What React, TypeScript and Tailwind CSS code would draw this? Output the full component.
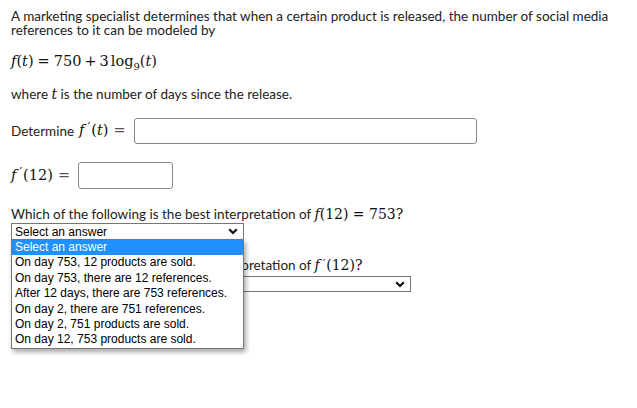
import { FC } from "react";

const options = [
  "Select an answer",
  "On day 753, 12 products are sold.",
  "On day 753, there are 12 references.",
  "After 12 days, there are 753 references.",
  "On day 2, there are 751 references.",
  "On day 2, 751 products are sold.",
  "On day 12, 753 products are sold.",
];

const Chevron: FC = () => (
  <svg width="10" height="7" viewBox="0 0 10 7" className="shrink-0">
    <path d="M1.2 1.2 L5 5 L8.8 1.2" fill="none" stroke="#111" strokeWidth="2.2" />
  </svg>
);

const I: FC<{ children: React.ReactNode }> = ({ children }) => <span className="italic">{children}</span>;

const math = "font-['DejaVu_Serif',serif] text-[14.5px] text-[#111]";

const FPrime: FC<{ arg: string; italicArg?: boolean }> = ({ arg, italicArg }) => (
  <span className={math}>
    <I>f</I>
    <span className="text-[12px] relative top-[-3px] ml-[3px] mr-[1px]">′</span>(
    {italicArg ? <I>{arg}</I> : arg})
  </span>
);

const App: FC = () => {
  return (
    <div className="relative w-[637px] h-[408px] bg-white text-[#222] font-['Lato',sans-serif] text-[13.5px]">
      <div className="pl-[11px] pt-[9px] w-[626px]">
        <p className="leading-[14px]">
          A marketing specialist determines that when a certain product is released, the number of social media
          references to it can be modeled by
        </p>

        <div className={`mt-[15px] h-[20px] flex items-center ${math}`}>
          <I>f</I>(<I>t</I>)<span className="mx-[4px]">=</span>750<span className="mx-[3px]">+</span>3
          <span className="ml-[2px]">log</span>
          <span className="text-[10px] relative top-[4px]">9</span>(<I>t</I>)
        </div>

        <p className="mt-[15px] leading-[14px]">
          where <span className="font-['DejaVu_Serif',serif] italic text-[14px] text-[#111]">t</span> is the number
          of days since the release.
        </p>

        <div className="mt-[17px] flex items-center h-[26px]">
          <span>Determine</span>
          <span className="ml-[5px]">
            <FPrime arg="t" italicArg />
          </span>
          <span className={`${math} ml-[5px] text-[#555]`}>=</span>
          <div className="ml-[8px] w-[343px] h-[26px] border border-[#888] rounded-[3px]" />
        </div>

        <div className="mt-[18px] flex items-center h-[27px]">
          <FPrime arg="12" />
          <span className={`${math} ml-[5px] text-[#555]`}>=</span>
          <div className="ml-[8px] w-[95px] h-[27px] border border-[#888] rounded-[3px]" />
        </div>

        <p className="mt-[18px] leading-[14px]">
          Which of the following is the best interpretation of{" "}
          <span className="font-['DejaVu_Serif',serif] text-[14px] text-[#111]">
            <I>f</I>(12) = 753?
          </span>
        </p>

        <div className="relative mt-[2px] w-[233px]">
          <div className="h-[17px] border border-[#767676] flex items-center justify-between pl-[3px] pr-[5px] font-['Liberation_Sans',sans-serif] text-[12px] text-black">
            <span>Select an answer</span>
            <Chevron />
          </div>
          <ul className="absolute left-0 top-[16px] w-[233px] z-10 bg-white border border-[#767676] shadow-[2px_3px_5px_rgba(0,0,0,0.35)] font-['Liberation_Sans',sans-serif] text-[12px] text-black">
            {options.map((o, i) => (
              <li
                key={o}
                className={`h-[15.4px] leading-[15.4px] pl-[3px] ${i === 0 ? "bg-[#1e90ff] text-white" : ""}`}
              >
                {o}
              </li>
            ))}
          </ul>
        </div>

        <p className="mt-[18px] leading-[14px]">
          Which of the following is the best interpretation of{" "}
          <span className="font-['DejaVu_Serif',serif] text-[14px] text-[#111]">
            <I>f</I>
            <span className="text-[11px] relative top-[-3px] ml-[3px] mr-[1px]">′</span>(12)?
          </span>
        </p>

        <div className="mt-[2px] w-[400px] h-[16px] border border-[#767676] flex items-center justify-end pr-[5px]">
          <Chevron />
        </div>
      </div>
    </div>
  );
};

export default App;
